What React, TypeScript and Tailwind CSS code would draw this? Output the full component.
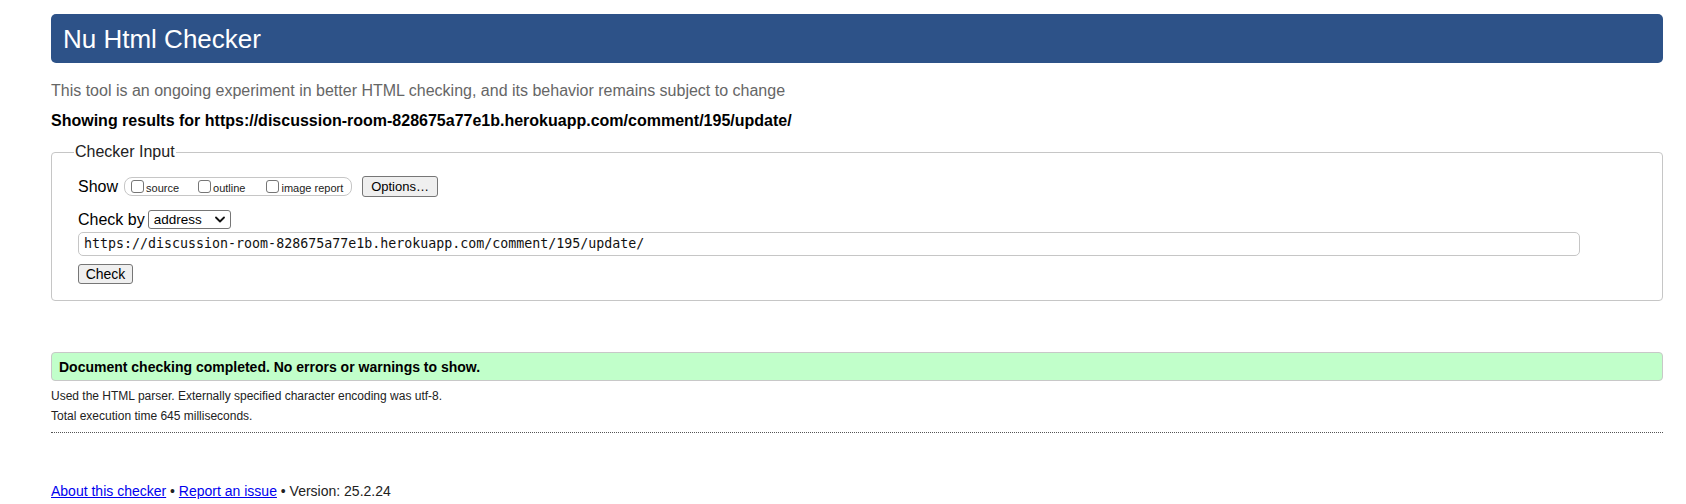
const CheckBox = ({ label }: { label: string }) => (
  <label className="flex items-center gap-[2px]">
    <span className="inline-block w-[13px] h-[13px] rounded-[3px] border border-[#767676] bg-white" />
    <span className="text-[11px] text-[#222] leading-none pt-[3px]">{label}</span>
  </label>
);

const App = () => {
  return (
    <div
      className="min-h-[504px] bg-white pl-[51px] pr-[23px] pt-[14px] text-black"
      style={{ fontFamily: '"Liberation Sans", Arial, Helvetica, sans-serif' }}
    >
      <div className="h-[49px] rounded-[5px] bg-[#2d5288] flex items-center pl-[12px]">
        <h1 className="text-[26px] text-white leading-none">Nu Html Checker</h1>
      </div>

      <p className="mt-[19px] text-[16px] leading-[18px] text-[#666]">
        This tool is an ongoing experiment in better HTML checking, and its behavior remains subject to change
      </p>
      <p className="mt-[12px] text-[16px] leading-[18px] font-bold">
        Showing results for https://discussion-room-828675a77e1b.herokuapp.com/comment/195/update/
      </p>

      <fieldset className="mt-[13px] border border-[#c6c6c6] rounded-[4px] pl-[26px] pb-[16px] pr-[80px]">
        <legend className="-ml-[4px] px-[1px] text-[16px] leading-[18px] text-[#222]">Checker Input</legend>

        <div className="mt-[15px] flex items-center h-[21px]">
          <span className="text-[16px] leading-none">Show</span>
          <div className="ml-[6px] h-[19px] w-[228px] rounded-[8px] border border-[#c6c6c6] flex items-center pl-[6px]">
            <CheckBox label="source" />
            <div className="ml-[19px]">
              <CheckBox label="outline" />
            </div>
            <div className="ml-[21px]">
              <CheckBox label="image report" />
            </div>
          </div>
          <button className="ml-[10px] h-[21px] w-[76px] rounded-[3px] border border-[#767676] bg-[#efefef] text-[13px] leading-none text-black">
            Options…
          </button>
        </div>

        <div className="mt-[13px] flex items-center h-[19px]">
          <span className="text-[16px] leading-none">Check by</span>
          <div className="ml-[3px] h-[19px] w-[83px] rounded-[3px] border border-[#767676] bg-white flex items-center justify-between pl-[5px] pr-[5px]">
            <span className="text-[13.5px] leading-none">address</span>
            <svg width="10" height="7" viewBox="0 0 10 7" fill="none">
              <path d="M1 1.5 L5 5.5 L9 1.5" stroke="#111" strokeWidth="1.8" strokeLinecap="round" strokeLinejoin="round" />
            </svg>
          </div>
        </div>

        <div className="mt-[3px] h-[24px] w-[1502px] rounded-[5px] border border-[#c6c6c6] flex items-center pl-[5px]">
          <span
            className="text-[13.3px] leading-none text-[#111]"
            style={{ fontFamily: '"DejaVu Sans Mono", "Liberation Mono", monospace' }}
          >
            https://discussion-room-828675a77e1b.herokuapp.com/comment/195/update/
          </span>
        </div>

        <button className="mt-[8px] block h-[20px] w-[55px] rounded-[3px] border border-[#767676] bg-[#efefef] text-[14px] leading-none text-black">
          Check
        </button>
      </fieldset>

      <div className="mt-[51px] h-[29px] rounded-[4px] border border-[#c8c8c8] bg-[#c1ffca] flex items-center pl-[7px]">
        <span className="text-[14px] font-bold leading-none">
          Document checking completed. No errors or warnings to show.
        </span>
      </div>

      <p className="mt-[5px] text-[12px] leading-[20px] text-[#222]">
        Used the HTML parser. Externally specified character encoding was utf-8.
      </p>
      <p className="text-[12px] leading-[20px] text-[#222]">Total execution time 645 milliseconds.</p>

      <div className="mt-[6px] border-t border-dotted border-[#555]" />

      <p className="mt-[49px] text-[14px] leading-[18px] text-[#222]">
        <a href="#" className="text-[#0000ee] underline">
          About this checker
        </a>{" "}
        •{" "}
        <a href="#" className="text-[#0000ee] underline">
          Report an issue
        </a>{" "}
        • Version: 25.2.24
      </p>
    </div>
  );
};

export default App;
